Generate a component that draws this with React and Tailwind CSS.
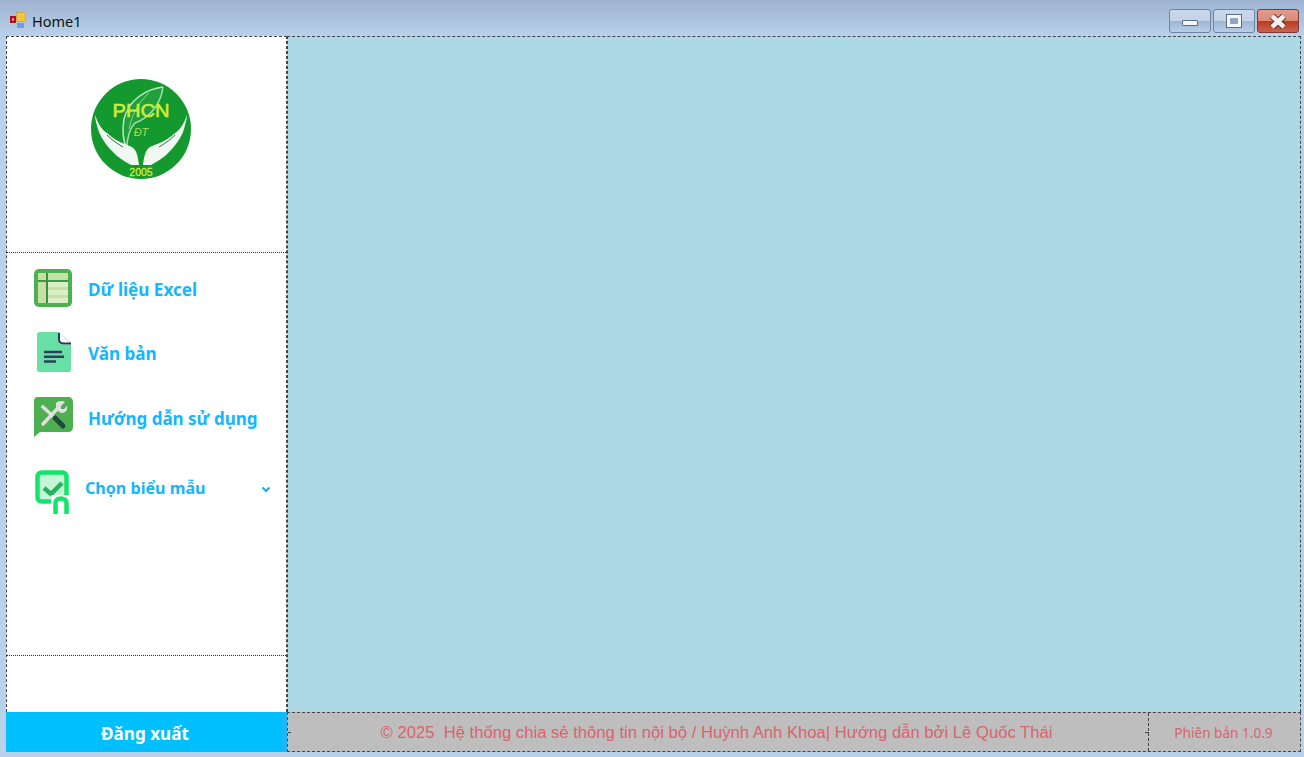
const MenuItem = ({ icon, label, className, textClass }) => (
  <div className={"flex items-center " + className}>
    {icon}
    <span className={"font-bold text-[#14b6ff] whitespace-nowrap " + textClass}>{label}</span>
  </div>
);

const Logo = () => (
  <svg width="100" height="100" viewBox="0 0 100 100">
    <circle cx="50" cy="50" r="50" fill="#14992f" />
    <path d="M72 8C56 10 38 20 33 40C31 52 32 62 36 70C36 58 38 50 44 44C60 38 70 24 72 8Z" fill="#1fa03a" />
    <path d="M72 8C56 10 38 20 33 40C31 52 32 62 36 70" fill="none" stroke="#bfe5c6" strokeWidth="1.500" />
    <path d="M72 8C70 24 60 38 44 44C38 50 36 58 36 70" fill="none" stroke="#a9dcb3" strokeWidth="1.500" />
    <path d="M58 14C48 24 42 32 38 50" fill="none" stroke="#8fd09b" strokeWidth="1" />
    <text x="50" y="38" textAnchor="middle" fontFamily="Liberation Sans, sans-serif" fontSize="19" fontWeight="400" stroke="#cdec3a" strokeWidth="0.600" fill="#cdec3a" textLength="57" lengthAdjust="spacingAndGlyphs">PHCN</text>
    <text x="50" y="57" textAnchor="middle" fontFamily="Liberation Sans, sans-serif" fontSize="11" fontStyle="italic" fill="#a9df5a">ĐT</text>
    <path d="M4 36C7 44 10 50 16 54C20 58 25 61 29 63C35 66 42 67 44 71C46 74 47 78 48 86L40 86C33 82 26 78 21 72C15 66 10 58 8 53C6 47 4 40 4 36Z" fill="#f1f8f1" />
    <path d="M96 36C93 44 90 50 84 54C80 58 75 61 71 63C65 66 58 67 56 71C54 74 53 78 52 86L60 86C67 82 74 78 79 72C85 66 90 58 92 53C94 47 96 40 96 36Z" fill="#f1f8f1" />
    <path d="M16 56C20 60 25 64 32 68" fill="none" stroke="#44615a" strokeWidth="1" />
    <path d="M84 56C80 60 75 64 68 68" fill="none" stroke="#44615a" strokeWidth="1" />
    <text x="50" y="97" textAnchor="middle" fontFamily="Liberation Sans, sans-serif" fontSize="10.5" fontWeight="400" stroke="#cdec3a" strokeWidth="0.300" fill="#cdec3a">2005</text>
  </svg>
);

const SheetIcon = () => (
  <svg width="38" height="38" viewBox="0 0 38 38" className="shrink-0">
    <rect width="38" height="38" rx="5" fill="#4caf50" />
    <rect x="4" y="4" width="30" height="30" fill="#dcedc8" />
    <rect x="4" y="4" width="30" height="7" fill="#c5e1a5" />
    <rect x="4" y="4" width="8" height="30" fill="#c5e1a5" />
    <rect x="4" y="18" width="30" height="3" fill="#c5e1a5" />
    <rect x="4" y="26" width="30" height="3" fill="#c5e1a5" />
    <rect x="4" y="11" width="30" height="2" fill="#3f9a45" />
    <rect x="12" y="4" width="2" height="30" fill="#3d8f42" />
  </svg>
);

const DocIcon = () => (
  <svg width="36" height="40" viewBox="0 0 36 42" preserveAspectRatio="none" className="shrink-0">
    <path d="M4 0H23L35 12V39C35 41 34 42 32 42H4C2 42 1 41 1 39V3C1 1 2 0 4 0Z" fill="#69e0a3" />
    <path d="M23 0V8C23 11 25 13 28 13H35" fill="#fff" />
    <path d="M23 1V8C23 11 25 12 28 12H35" fill="none" stroke="#2b3a5a" strokeWidth="2" />
    <path d="M8 21H26M8 26H28M8 31H20" stroke="#2b4060" strokeWidth="2.500" fill="none" />
  </svg>
);

const ToolIcon = () => (
  <svg width="40" height="41" viewBox="0 0 40 41" className="shrink-0">
    <path d="M5 0H35C38 0 40 2 40 5V30C40 33 38 35 35 35H7L1 40V5C1 2 2 0 5 0Z" fill="#4caf50" />
    <path d="M10 27L25 11" stroke="#e0e0e0" strokeWidth="3.500" strokeLinecap="round" />
    <path d="M23 6C26 3 31 4 32 5L28 9V12H31L34 9C35 12 33 16 29 16C26 16 22 12 23 6Z" fill="#e0e0e0" />
    <path d="M10 10L21 20" stroke="#e0e0e0" strokeWidth="3.500" strokeLinecap="square" />
    <path d="M22 21L30 29" stroke="#1b4d3e" strokeWidth="5" strokeLinecap="round" />
  </svg>
);

const BadgeIcon = () => (
  <svg width="36" height="44" viewBox="0 0 36 44" className="shrink-0">
    <rect x="2.500" y="2.500" width="29" height="29" rx="4" fill="#c4f7d7" stroke="#13e56a" strokeWidth="4.500" />
    <path d="M9 18L16 24L27 13" fill="none" stroke="#27b25e" strokeWidth="4.500" />
    <rect x="16" y="25" width="20" height="19" fill="#fff" />
    <path d="M20.500 44V33C20.500 27 31.500 27 31.500 33V44" fill="none" stroke="#13e56a" strokeWidth="4.500" />
  </svg>
);

const WinBtn = ({ className, children }) => (
  <div className={"h-[24px] rounded-[3px] border border-[#6f84a3] flex items-center justify-center " + className}>
    {children}
  </div>
);

export default function App() {
  return (
    <div className="w-[1304px] h-[757px] flex flex-col bg-[#b9d1ea] overflow-hidden font-['Noto_Sans',sans-serif]">
      {/* title bar */}
      <div className="h-[36px] shrink-0 flex items-center pl-[10px] pr-[5px] pt-[6px] bg-gradient-to-b from-[#9db3d0] to-[#b9d1ea]">
        <svg width="16" height="16" viewBox="0 0 16 16" className="shrink-0 mt-[-2px]">
          <rect x="0" y="4" width="6" height="7" fill="#b01020" />
          <rect x="2" y="6.500" width="2" height="2" fill="#f5d0d0" />
          <rect x="6.500" y="0.500" width="9" height="9" fill="#f5c542" stroke="#c99a30" strokeWidth="0.600" />
          <rect x="7" y="11" width="7" height="5" fill="#6f9fe0" />
        </svg>
        <span className="ml-[6px] text-[14.500px] text-[#111] leading-none">Home1</span>
        <div className="ml-auto flex gap-[2px]">
          <WinBtn className="w-[42px] bg-[linear-gradient(#c9d7ea_0%,#c3d3e8_48%,#9fb6d3_52%,#b9cde5_100%)]">
            <div className="w-[16px] h-[6px] bg-[#f4f6f8] border border-[#5b6b82] rounded-[1px] mt-[3px]" />
          </WinBtn>
          <WinBtn className="w-[42px] bg-[linear-gradient(#c9d7ea_0%,#c3d3e8_48%,#9fb6d3_52%,#b9cde5_100%)]">
            <div className="w-[14px] h-[12px] bg-[#8fa6c4] border-[3px] border-[#f4f6f8] outline outline-1 outline-[#5b6b82]" />
          </WinBtn>
          <WinBtn className="w-[42px] border-[#7a3a3a] bg-[linear-gradient(#e49a88_0%,#dc8a78_48%,#bf3a20_52%,#c9654c_100%)]">
            <svg width="18" height="15" viewBox="0 0 18 15">
              <path d="M3 2L15 13M15 2L3 13" stroke="#5b3030" strokeWidth="6.500" />
              <path d="M3 2L15 13M15 2L3 13" stroke="#f3efec" strokeWidth="4.500" />
            </svg>
          </WinBtn>
        </div>
      </div>

      {/* client area */}
      <div className="flex h-[716px] ml-[6px] mr-[3px] shrink-0">
        {/* left column */}
        <div className="w-[281px] shrink-0 flex flex-col bg-white border border-dashed border-[#444]">
          <div className="h-[216px] shrink-0 flex justify-center pt-[42px] pr-[11px] border-b border-dotted border-[#333]">
            <Logo />
          </div>
          <div className="h-[403px] shrink-0 border-b border-dotted border-[#333]">
            <MenuItem icon={<SheetIcon />} label="Dữ liệu Excel" className="h-[38px] mt-[16px] ml-[27px] gap-[16px]" textClass="text-[17.100px] pt-[4px]" />
            <MenuItem icon={<DocIcon />} label="Văn bản" className="h-[42px] mt-[24px] ml-[29px] gap-[16px]" textClass="text-[17.100px] pt-[4px]" />
            <MenuItem icon={<ToolIcon />} label="Hướng dẫn sử dụng" className="h-[41px] mt-[24px] ml-[26px] gap-[15px]" textClass="text-[17px] pt-[2px]" />
            <div className="flex items-center h-[44px] mt-[32px] ml-[28px]">
              <BadgeIcon />
              <span className="ml-[14px] font-bold text-[16.100px] text-[#14b6ff] mb-[8px] whitespace-nowrap">Chọn biểu mẫu</span>
              <svg width="10" height="7" viewBox="0 0 10 7" className="ml-auto mr-[15px] mb-[5px]">
                <path d="M1.500 1.500L5 5L8.500 1.500" fill="none" stroke="#1fa8ee" strokeWidth="2" />
              </svg>
            </div>
          </div>
          <div className="flex-1 flex flex-col justify-end">
            <div className="h-[40px] bg-[#00bfff] border-r-[5px] border-[#1ab9f5] flex items-center justify-center pl-[2px] pt-[3px] text-white font-bold text-[17.100px] -mx-px -mb-px">
              Đăng xuất
            </div>
          </div>
        </div>

        {/* right column */}
        <div className="flex-1 flex flex-col min-w-0">
          <div className="h-[676px] shrink-0 bg-[#add8e6] border-t border-x border-dashed border-[#444]" />
          <div className="h-[40px] shrink-0 relative flex bg-[#bebebe] border border-dashed border-[#444] text-[#d9646c]">
            <span className="absolute left-0 top-[19px] w-[3px] h-px bg-[#444]" />
            <div className="w-[861px] shrink-0 relative flex items-center justify-center pr-[3px] pt-[2px] border-r border-dashed border-[#444] font-['Liberation_Sans',sans-serif] text-[16.650px] whitespace-pre">
              © 2025  Hệ thống chia sẻ thông tin nội bộ / Huỳnh Anh Khoa| Hướng dẫn bởi Lê Quốc Thái
              <span className="absolute right-[-1px] top-[19px] w-[4px] h-px bg-[#444]" />
            </div>
            <div className="flex-1 flex items-center justify-center pr-[2px] pt-[2px] text-[13.600px] whitespace-nowrap">
              Phiên bản 1.0.9
            </div>
          </div>
        </div>
      </div>
    </div>
  );
}
